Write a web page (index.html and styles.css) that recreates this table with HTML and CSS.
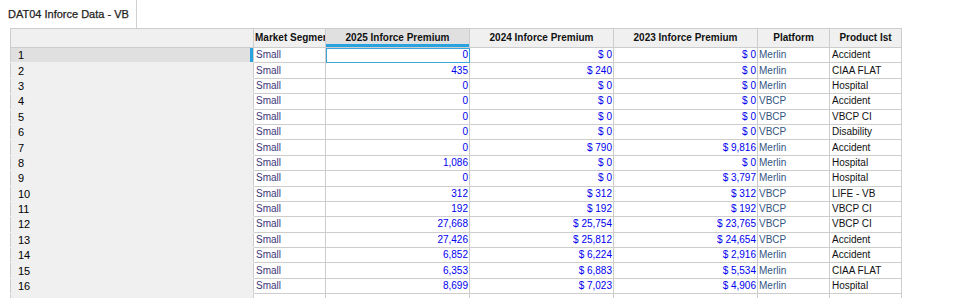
FILE: index.html
```html
<!DOCTYPE html>
<html lang="en">
<head>
    <meta charset="UTF-8">
    <title>DAT04 Inforce Data - VB</title>
    <link rel="stylesheet" href="styles.css">
</head>
<body>
    <div class="tab-bar">
        <div class="tab">DAT04 Inforce Data - VB</div>
    </div>

    <div class="sheet">
        <table class="grid">
            <colgroup>
                <col class="col-rowhead">
                <col class="col-narrow">
                <col class="col-wide">
                <col class="col-wide">
                <col class="col-wide">
                <col class="col-narrow">
                <col class="col-narrow">
            </colgroup>
            <thead>
                <tr>
                    <th class="corner"></th>
                    <th class="left">Market Segment</th>
                    <th class="active">2025 Inforce Premium</th>
                    <th>2024 Inforce Premium</th>
                    <th>2023 Inforce Premium</th>
                    <th>Platform</th>
                    <th>Product Ist</th>
                </tr>
            </thead>
            <tbody>
                <tr class="selected"><td class="rh">1</td><td class="seg">Small</td><td class="num current">0</td><td class="num">$ 0</td><td class="num">$ 0</td><td class="plat">Merlin</td><td class="prod">Accident</td></tr>
                <tr><td class="rh">2</td><td class="seg">Small</td><td class="num">435</td><td class="num">$ 240</td><td class="num">$ 0</td><td class="plat">Merlin</td><td class="prod">CIAA FLAT</td></tr>
                <tr><td class="rh">3</td><td class="seg">Small</td><td class="num">0</td><td class="num">$ 0</td><td class="num">$ 0</td><td class="plat">Merlin</td><td class="prod">Hospital</td></tr>
                <tr><td class="rh">4</td><td class="seg">Small</td><td class="num">0</td><td class="num">$ 0</td><td class="num">$ 0</td><td class="plat">VBCP</td><td class="prod">Accident</td></tr>
                <tr><td class="rh">5</td><td class="seg">Small</td><td class="num">0</td><td class="num">$ 0</td><td class="num">$ 0</td><td class="plat">VBCP</td><td class="prod">VBCP CI</td></tr>
                <tr><td class="rh">6</td><td class="seg">Small</td><td class="num">0</td><td class="num">$ 0</td><td class="num">$ 0</td><td class="plat">VBCP</td><td class="prod">Disability</td></tr>
                <tr><td class="rh">7</td><td class="seg">Small</td><td class="num">0</td><td class="num">$ 790</td><td class="num">$ 9,816</td><td class="plat">Merlin</td><td class="prod">Accident</td></tr>
                <tr><td class="rh">8</td><td class="seg">Small</td><td class="num">1,086</td><td class="num">$ 0</td><td class="num">$ 0</td><td class="plat">Merlin</td><td class="prod">Hospital</td></tr>
                <tr><td class="rh">9</td><td class="seg">Small</td><td class="num">0</td><td class="num">$ 0</td><td class="num">$ 3,797</td><td class="plat">Merlin</td><td class="prod">Hospital</td></tr>
                <tr><td class="rh">10</td><td class="seg">Small</td><td class="num">312</td><td class="num">$ 312</td><td class="num">$ 312</td><td class="plat">VBCP</td><td class="prod">LIFE - VB</td></tr>
                <tr><td class="rh">11</td><td class="seg">Small</td><td class="num">192</td><td class="num">$ 192</td><td class="num">$ 192</td><td class="plat">VBCP</td><td class="prod">VBCP CI</td></tr>
                <tr><td class="rh">12</td><td class="seg">Small</td><td class="num">27,668</td><td class="num">$ 25,754</td><td class="num">$ 23,765</td><td class="plat">VBCP</td><td class="prod">VBCP CI</td></tr>
                <tr><td class="rh">13</td><td class="seg">Small</td><td class="num">27,426</td><td class="num">$ 25,812</td><td class="num">$ 24,654</td><td class="plat">VBCP</td><td class="prod">Accident</td></tr>
                <tr><td class="rh">14</td><td class="seg">Small</td><td class="num">6,852</td><td class="num">$ 6,224</td><td class="num">$ 2,916</td><td class="plat">Merlin</td><td class="prod">Accident</td></tr>
                <tr><td class="rh">15</td><td class="seg">Small</td><td class="num">6,353</td><td class="num">$ 6,883</td><td class="num">$ 5,534</td><td class="plat">Merlin</td><td class="prod">CIAA FLAT</td></tr>
                <tr><td class="rh">16</td><td class="seg">Small</td><td class="num">8,699</td><td class="num">$ 7,023</td><td class="num">$ 4,906</td><td class="plat">Merlin</td><td class="prod">Hospital</td></tr>
                <tr><td class="rh"></td><td></td><td></td><td></td><td></td><td></td><td></td></tr>
            </tbody>
        </table>
    </div>
</body>
</html>
```

FILE: styles.css
```css
* {
    margin: 0;
    padding: 0;
    box-sizing: border-box;
}

body {
    font-family: 'Liberation Sans', Arial, sans-serif;
    font-size: 10px;
    background: #fff;
    color: #000;
    overflow: hidden;
}

.tab-bar {
    height: 28px;
    display: flex;
}

.tab {
    width: 137px;
    height: 28px;
    padding-left: 8px;
    border-right: 1px solid #d0d0d0;
    display: flex;
    align-items: center;
    font-size: 11px;
    white-space: nowrap;
    color: #222;
    -webkit-text-stroke: 0.25px #222;
}

.sheet {
    padding-left: 10px;
}

.grid {
    border-collapse: collapse;
    table-layout: fixed;
    width: 892px;
}

.col-rowhead { width: 243px; }
.col-narrow { width: 72px; }
.col-wide { width: 144px; }

.grid th,
.grid td {
    border: 1px solid #cdcdcd;
    white-space: nowrap;
    overflow: hidden;
    line-height: 12px;
}

.grid th {
    height: 19px;
    background: #f0f0f0;
    font-weight: 700;
    text-align: center;
    color: #111;
    padding: 0 2px;
}

.grid th.left {
    text-align: left;
    padding: 0 1px;
    text-overflow: clip;
}

.grid th.active {
    background: #e0e0e0;
    box-shadow: inset 0 -3px 0 #29a3df;
}

.grid tbody tr {
    height: 15.4px;
}

.grid td {
    padding: 0 1px;
    color: #000;
}

.grid td.rh {
    background: #f0f0f0;
    padding-left: 7px;
    font-size: 11px;
    border-top-color: #f0f0f0;
    border-bottom-color: #f0f0f0;
}

.grid tr.selected td.rh {
    background: #e0e0e0;
    box-shadow: inset -3px 0 0 #29a3df;
    border-top-color: #cdcdcd;
}

.grid td.seg {
    color: #3c3678;
    padding-left: 2px;
}

.grid td.num {
    color: #0000f0;
    text-align: right;
    padding-right: 1px;
}

.grid td.current {
    outline: 1px solid #3aa6dc;
    outline-offset: -1px;
}

.grid td.plat {
    color: #33557f;
    padding-left: 1px;
}

.grid td.prod {
    padding-left: 2px;
    color: #111;
}
```
